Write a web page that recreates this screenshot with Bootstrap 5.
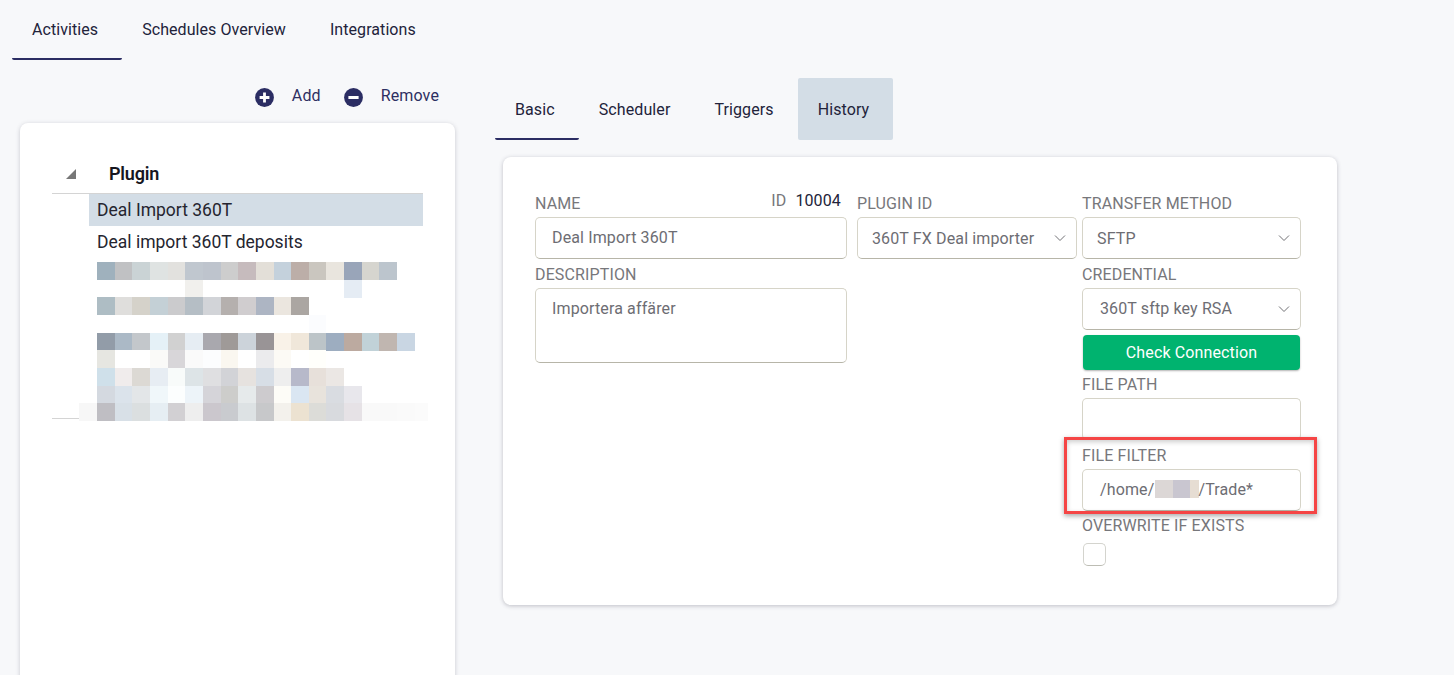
<!DOCTYPE html>
<html lang="en">
<head>
<meta charset="utf-8">
<title>Activities</title>
<link href="https://cdn.jsdelivr.net/npm/bootstrap@5.3.0/dist/css/bootstrap.min.css" rel="stylesheet">
<style>
html,body{height:675px;overflow:hidden}
body{background:#f7f8fa;font-family:Roboto,"Liberation Sans",sans-serif;font-size:16px;letter-spacing:.13px;color:#22233a}
.tabbar .nav-link{padding:0 24px 0 20px;color:#22233a;border-bottom:2px solid transparent;border-radius:2px;display:flex;align-items:center}
.tabbar .nav-link.active{border-bottom-color:#2b2d63}
.tabbar .nav-link.hovered{background:#d3dde6}
.top-tabs{height:60px;margin-left:12px;letter-spacing:.07px}
.top-tabs .nav-link{height:60px;padding-top:2px}
.side{width:435px;margin-left:20px}
.tool-row{height:63px;padding-right:16px;padding-top:25px;color:#2d2f62;gap:23px}
.tool-item{gap:18px;line-height:22px}
.tool-item svg{margin-top:3px}
.tree-card{height:640px;border:0;border-radius:8px;background:#fff;box-shadow:0 1px 4px rgba(60,60,80,.25);padding:32px}
.tree-head{height:39px;border-bottom:1px solid #d4d4d4;font-size:18px;font-weight:600;color:#16161f;letter-spacing:-.2px;align-items:center;padding-bottom:1px}
.tree-arrow{width:57px;padding-left:14px;line-height:0}
.tree-row{height:32px;margin-left:37px;padding-left:8px;line-height:32px;font-size:17.5px;color:#25252f;letter-spacing:0}
.tree-row.picked{background:#d3dde6}
.tree-blank{position:relative;height:161px;border-bottom:1px solid #d4d4d4}
.mosaic{position:absolute;left:27px;top:4px;width:349px;height:159px}
.pane{margin-left:40px;margin-top:18px}
.pane-tabs{letter-spacing:.1px}
.pane-tabs .nav-link{height:62px;padding-top:4px}
.form-card{width:834px;margin:17px 0 0 8px;padding:34px 36px 39px 32px;border:0;border-radius:8px;background:#fff;box-shadow:0 1px 4px rgba(60,60,80,.3)}
.col-name{width:312px;margin-right:10px}
.col-plugin{width:220px;margin-right:5px}
.col-transfer{position:relative;width:219px}
.field-label{display:block;height:24px;margin:0 0 2px;padding-top:1px;line-height:24px;color:#77777b;text-transform:uppercase;white-space:nowrap}
.id-note{line-height:20px;padding-right:6px;gap:9px}
.id-note span:first-child{color:#77777b}
.form-control.entry,.form-select.entry{height:42px;margin-bottom:3px;padding:0 16px;font-size:16px;letter-spacing:.13px;color:#6d6d73;border:1px solid #d6d4c8;border-bottom-color:#b7b5a8;border-radius:5px;background-color:#fff;box-shadow:none}
input.form-control.entry{padding-bottom:2px}
.form-select.entry{background-image:url("data:image/svg+xml,%3csvg xmlns='http://www.w3.org/2000/svg' viewBox='0 0 12 8'%3e%3cpath fill='none' stroke='%23707075' d='M1 1.5l5 5 5-5'/%3e%3c/svg%3e");background-position:right 10px center;background-size:12px 8px;padding-left:17px;padding-right:30px}
.form-select.entry.tight{padding-left:14px;padding-top:2px}
textarea.form-control.entry{height:75px;padding-top:8px;resize:none}
.check-btn{display:block;width:217px;height:35px;margin:5px 1px 2px;padding:0;border:0;border-radius:4px;background:#00b36f;color:#fff;font-size:16px;letter-spacing:.13px;box-shadow:0 1px 2px rgba(0,0,0,.3)}
.masked{display:inline-block;width:44px;height:18px;vertical-align:-3px;margin:0 -1px 0 1px;background:linear-gradient(90deg,#dcd7d6 0 18px,#c9c6d0 18px 35px,#e6ddd3 35px)}
.fake-input{display:flex;align-items:center}
.form-control.entry.fake-input{padding-left:17px;margin-bottom:2px}
.box-check{display:block;width:23px;height:23px;margin:6px 0 0 1px;border:1px solid #d4d4ce;border-bottom-color:#bdbdb4;border-radius:5px;background:#fff}
.call-out{position:absolute;left:-18px;top:246px;width:253px;height:77px;border:3px solid #f54545;box-shadow:0 2px 5px rgba(0,0,0,.35),inset 0 2px 5px rgba(0,0,0,.2);pointer-events:none}
</style>
</head>
<body>
<ul class="nav tabbar top-tabs">
  <li class="nav-item"><a class="nav-link active" href="#">Activities</a></li>
  <li class="nav-item"><a class="nav-link" href="#">Schedules Overview</a></li>
  <li class="nav-item"><a class="nav-link" href="#">Integrations</a></li>
</ul>
<div class="d-flex align-items-start">
  <div class="side">
    <div class="tool-row d-flex justify-content-end">
      <div class="tool-item d-flex">
        <svg width="19" height="19" viewBox="0 0 19 19"><circle cx="9.5" cy="9.5" r="9.4" fill="#2b2d63"/><path d="M9.5 4.6v9.8M4.6 9.5h9.8" stroke="#fff" stroke-width="2.8"/></svg>
        <span>Add</span>
      </div>
      <div class="tool-item d-flex">
        <svg width="19" height="19" viewBox="0 0 19 19"><circle cx="9.5" cy="9.5" r="9.4" fill="#2b2d63"/><path d="M4.4 9.5h10.2" stroke="#fff" stroke-width="3"/></svg>
        <span>Remove</span>
      </div>
    </div>
    <div class="card tree-card">
      <div class="tree-head d-flex">
        <span class="tree-arrow"><svg width="10" height="10" viewBox="0 0 10 10"><polygon points="10,0 10,10 0,10" fill="#777"/></svg></span>
        <span>Plugin</span>
      </div>
      <div class="tree-row picked">Deal Import 360T</div>
      <div class="tree-row">Deal import 360T deposits</div>
      <div class="tree-blank">
        <svg class="mosaic" viewBox="79 262 349 159" shape-rendering="crispEdges" aria-hidden="true">
          <g id="cells"></g>
        </svg>
      </div>
    </div>
  </div>
  <div class="pane">
    <ul class="nav tabbar pane-tabs">
      <li class="nav-item"><a class="nav-link active" href="#">Basic</a></li>
      <li class="nav-item"><a class="nav-link" href="#">Scheduler</a></li>
      <li class="nav-item"><a class="nav-link" href="#">Triggers</a></li>
      <li class="nav-item"><a class="nav-link hovered" href="#">History</a></li>
    </ul>
    <div class="card form-card">
      <div class="d-flex align-items-start">
        <div class="col-name">
          <div class="d-flex justify-content-between">
            <label class="field-label">Name</label>
            <div class="id-note d-flex"><span>ID</span><span>10004</span></div>
          </div>
          <input class="form-control entry" value="Deal Import 360T">
          <label class="field-label">Description</label>
          <textarea class="form-control entry">Importera affärer</textarea>
        </div>
        <div class="col-plugin">
          <label class="field-label">Plugin ID</label>
          <select class="form-select entry tight"><option>360T FX Deal importer</option></select>
        </div>
        <div class="col-transfer">
          <label class="field-label">Transfer method</label>
          <select class="form-select entry tight"><option>SFTP</option></select>
          <label class="field-label">Credential</label>
          <select class="form-select entry"><option>360T sftp key RSA</option></select>
          <button class="btn check-btn" type="button">Check Connection</button>
          <label class="field-label">File path</label>
          <input class="form-control entry" value="">
          <label class="field-label">File filter</label>
          <div class="form-control entry fake-input"><span>/home/<span class="masked"></span>/Trade*</span></div>
          <label class="field-label">Overwrite if exists</label>
          <span class="box-check"></span>
          <div class="call-out"></div>
        </div>
      </div>
    </div>
  </div>
</div>
<script>
var rows=[
[262,0,["#9fb1bd","#c0c1c3","#cad3d5","#dfe3e2","#e2e1de","#c0c7cf","#bec4cd","#cdcdcd","#c6bbbd","#e3dfd8","#c4d1dc","#bcaea8","#cac6bf","#e9e5de","#99a5b9","#d6d5cf","#bcc5cd"]],
[280,5,["#f1f0ed"]],[280,14,["#e5ecf4"]],
[297,0,["#aebdc4","#dfdedc","#d5d2ca","#c4d0d6","#cbcbcd","#b5bec5","#d2d4d8","#b5b0ae","#d0cdcf","#adb5c3","#ebe6df","#aba6a2"]],
[315,12,["#fbfcfe"]],
[333,0,["#929ca8","#abb9c6","#c3c7cb","#e5f1f7","#d1d1d1","#e6edf3","#a9a8ae","#9f9a98","#ccd3da","#999496","#f9f2e8","#f0e7da","#bcc4c8","#9dadc0","#bcaaa0","#c1d2d8","#c0b6b0","#c9d6e3"]],
[350,0,["#e6e6e1","#fff","#fff","#fafaf8","#d8d6d9","#fafafa","#fcfdfe","#faf7f0","#fff","#ebebed","#fcfaf5","#fff","#fffffb"]],
[368,0,["#cfe0ea","#f0ecec","#dcd9d4","#e7edf3","#f8fbfa","#dde4e7","#dfdfe1","#d2d3d7","#e6e2df","#d7dee6","#eeeeee","#b7b9ca","#e7e0da","#ebe7e4"]],
[386,0,["#d4d9e0","#dbe3eb","#e3e6e8","#f0f7fa","#fcfefe","#edf4f9","#d5d4d9","#cdcdcb","#e6eaeb","#cdcbce","#fdfcf7","#dae6f2","#e8e3dc","#d9dce1","#e8e7ec"]],
[403,-1,["#f7f7f7","#bfbec3","#d8e0e7","#dbdfe0","#e6eef3","#d2d0d3","#eeeeee","#cbc7cd","#c9cbcf","#dde2e4","#c7c8ca","#f3f1ec","#ece2d1","#dcdcd8","#d8dade","#e6e2e6","#f9f9f9","#f9f9f9","#fafafa","#fbfbfb"]]
];
var g=document.getElementById("cells"),ns="http://www.w3.org/2000/svg";
rows.forEach(function(r){r[2].forEach(function(c,i){
  var e=document.createElementNS(ns,"rect"),x=97+(r[1]+i)*17.65;
  e.setAttribute("x",x);e.setAttribute("y",r[0]);e.setAttribute("width",17.65);e.setAttribute("height",r[0]==403?18:17.7);e.setAttribute("fill",c);g.appendChild(e);
});});
</script>
<script src="https://cdn.jsdelivr.net/npm/bootstrap@5.3.0/dist/js/bootstrap.bundle.min.js"></script>
</body>
</html>
